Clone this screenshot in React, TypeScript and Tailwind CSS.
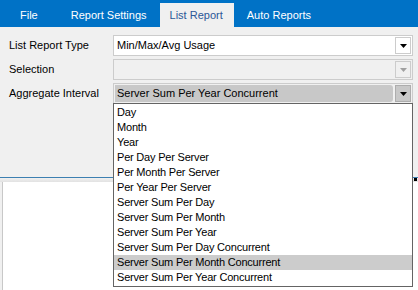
import React from 'react';

const tabs = ['File', 'Report Settings', 'List Report', 'Auto Reports'];

const intervals = [
  'Day',
  'Month',
  'Year',
  'Per Day Per Server',
  'Per Month Per Server',
  'Per Year Per Server',
  'Server Sum Per Day',
  'Server Sum Per Month',
  'Server Sum Per Year',
  'Server Sum Per Day Concurrent',
  'Server Sum Per Month Concurrent',
  'Server Sum Per Year Concurrent',
];

const Arrow = ({ disabled }: { disabled?: boolean }) => (
  <svg width="7" height="4" viewBox="0 0 7 4">
    <path d="M0 0h7L3.5 4z" fill={disabled ? '#a0a0a0' : '#000'} />
  </svg>
);

interface ComboProps {
  value?: string;
  disabled?: boolean;
  focused?: boolean;
}

const Combo = ({ value, disabled, focused }: ComboProps) => (
  <div
    className={`flex h-[21px] w-[300px] items-center border p-px ${
      disabled || focused ? 'border-[#cccccc] bg-[#f0f0f0]' : 'border-[#cccccc] bg-white'
    }`}
  >
    <div
      className={`flex h-full flex-1 items-center pl-[2px] text-[11px] text-black ${
        focused ? 'mr-[2px] rounded-r-[3px] bg-[#c8c8c8]' : ''
      }`}
    >
      {value}
    </div>
    <div
      className={`flex h-[17px] w-[16px] items-center justify-center border ${
        focused ? 'border-[#adadad] bg-[#c8c8c8]' : 'border-[#cccccc]'
      } ${disabled ? 'bg-[#f0f0f0]' : focused ? '' : 'bg-white'}`}
    >
      <Arrow disabled={disabled} />
    </div>
  </div>
);

const App = () => {
  return (
    <div
      className="relative flex h-[290px] w-[418px] flex-col overflow-hidden bg-[#f0f0f0]"
      style={{ fontFamily: '"Liberation Sans", Arial, sans-serif' }}
    >
      {/* Ribbon tabs */}
      <div className="flex h-[27px] items-end bg-[#0072c6] pl-[8px] text-[11px]">
        {tabs.map((tab) => {
          const active = tab === 'List Report';
          return (
            <div
              key={tab}
              className={`flex h-[24px] items-center ${
                active ? 'mx-[1px] bg-[#f0f0f0] pl-[10px] pr-[11px] text-[#2b5797]' : 'px-[12px] text-white'
              } ${tab === 'File' ? 'mr-[9px]' : ''}`}
            >
              {tab}
            </div>
          );
        })}
      </div>

      {/* Form */}
      <div className="flex h-[150px] flex-col gap-[3px] pt-[8px] text-[11px] text-black">
        <div className="flex items-center">
          <span className="w-[113px] pl-[9px]">List Report Type</span>
          <Combo value="Min/Max/Avg Usage" />
        </div>
        <div className="flex items-center">
          <span className="w-[113px] pl-[9px]">Selection</span>
          <Combo disabled />
        </div>
        <div className="flex items-center">
          <span className="w-[113px] pl-[9px]">Aggregate Interval</span>
          <Combo value="Server Sum Per Year Concurrent" focused />
        </div>
      </div>

      {/* Lower panel */}
      <div className="relative h-px bg-[#3c7fb1]">
        <div className="absolute right-[1px] top-[1px] h-[3px] w-[3px] bg-black" />
      </div>
      <div className="h-[4px] bg-gradient-to-b from-[#f0f0f0] to-[#e2e2e2]" />
      <div className="ml-[2px] flex-1 border-l border-[#c8c8c8] bg-white" />

      {/* Open dropdown list */}
      <div className="absolute left-[113px] top-[103px] w-[300px] border border-[#646464] bg-white py-px">
        {intervals.map((item) => (
          <div
            key={item}
            className={`flex h-[15px] items-center pl-[3px] text-[11px] leading-none tracking-[-0.2px] text-black ${
              item === 'Server Sum Per Month Concurrent' ? 'bg-[#cccccc]' : ''
            }`}
          >
            {item}
          </div>
        ))}
      </div>
    </div>
  );
};

export default App;
